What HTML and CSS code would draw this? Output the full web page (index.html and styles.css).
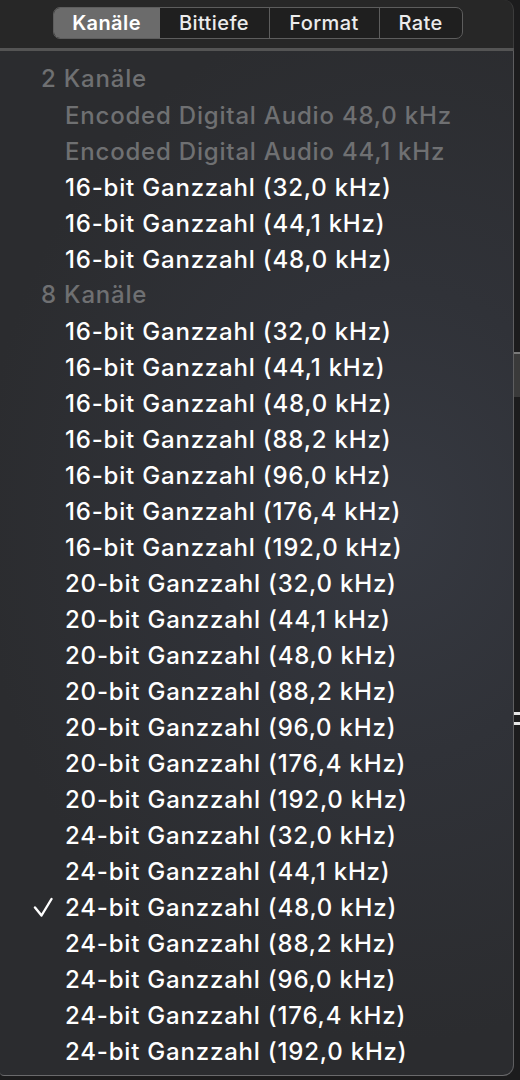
FILE: index.html
```html
<!DOCTYPE html>
<html lang="de">
<head>
    <meta charset="UTF-8">
    <meta name="viewport" content="width=device-width, initial-scale=1.0">
    <title>Audio-Format</title>
    <link rel="stylesheet" href="styles.css">
</head>
<body>
    <div class="window">
        <div class="panel">
            <div class="toolbar">
                <div class="segments">
                    <span class="segment active">Kanäle</span>
                    <span class="segment">Bittiefe</span>
                    <span class="segment">Format</span>
                    <span class="segment last">Rate</span>
                </div>
            </div>
            <div class="divider"></div>
            <div class="menu">
                <div class="menu-header">2 Kanäle</div>
                <div class="menu-item disabled"><span class="mark"></span>Encoded Digital Audio 48,0 kHz</div>
                <div class="menu-item disabled"><span class="mark"></span>Encoded Digital Audio 44,1 kHz</div>
                <div class="menu-item"><span class="mark"></span>16-bit Ganzzahl (32,0 kHz)</div>
                <div class="menu-item"><span class="mark"></span>16-bit Ganzzahl (44,1 kHz)</div>
                <div class="menu-item"><span class="mark"></span>16-bit Ganzzahl (48,0 kHz)</div>
                <div class="menu-header">8 Kanäle</div>
                <div class="menu-item"><span class="mark"></span>16-bit Ganzzahl (32,0 kHz)</div>
                <div class="menu-item"><span class="mark"></span>16-bit Ganzzahl (44,1 kHz)</div>
                <div class="menu-item"><span class="mark"></span>16-bit Ganzzahl (48,0 kHz)</div>
                <div class="menu-item"><span class="mark"></span>16-bit Ganzzahl (88,2 kHz)</div>
                <div class="menu-item"><span class="mark"></span>16-bit Ganzzahl (96,0 kHz)</div>
                <div class="menu-item"><span class="mark"></span>16-bit Ganzzahl (176,4 kHz)</div>
                <div class="menu-item"><span class="mark"></span>16-bit Ganzzahl (192,0 kHz)</div>
                <div class="menu-item"><span class="mark"></span>20-bit Ganzzahl (32,0 kHz)</div>
                <div class="menu-item"><span class="mark"></span>20-bit Ganzzahl (44,1 kHz)</div>
                <div class="menu-item"><span class="mark"></span>20-bit Ganzzahl (48,0 kHz)</div>
                <div class="menu-item"><span class="mark"></span>20-bit Ganzzahl (88,2 kHz)</div>
                <div class="menu-item"><span class="mark"></span>20-bit Ganzzahl (96,0 kHz)</div>
                <div class="menu-item"><span class="mark"></span>20-bit Ganzzahl (176,4 kHz)</div>
                <div class="menu-item"><span class="mark"></span>20-bit Ganzzahl (192,0 kHz)</div>
                <div class="menu-item"><span class="mark"></span>24-bit Ganzzahl (32,0 kHz)</div>
                <div class="menu-item"><span class="mark"></span>24-bit Ganzzahl (44,1 kHz)</div>
                <div class="menu-item checked">
                    <span class="mark">
                        <svg width="20" height="22" viewBox="0 0 20 22"><path d="M2 11.5 L8.5 19.5 L18.5 3" fill="none" stroke="#fff" stroke-width="2.4" stroke-linecap="round" stroke-linejoin="round"/></svg>
                    </span>24-bit Ganzzahl (48,0 kHz)
                </div>
                <div class="menu-item"><span class="mark"></span>24-bit Ganzzahl (88,2 kHz)</div>
                <div class="menu-item"><span class="mark"></span>24-bit Ganzzahl (96,0 kHz)</div>
                <div class="menu-item"><span class="mark"></span>24-bit Ganzzahl (176,4 kHz)</div>
                <div class="menu-item"><span class="mark"></span>24-bit Ganzzahl (192,0 kHz)</div>
            </div>
        </div>
        <div class="side">
            <div class="side-bar"></div>
            <div class="side-tick"></div>
            <div class="side-tick second"></div>
        </div>
    </div>
</body>
</html>
```

FILE: styles.css
```css
body, html {
    margin: 0;
    padding: 0;
    height: 100%;
    background-color: #1c1c1d;
    font-family: Inter, "Noto Sans", sans-serif;
    overflow: hidden;
}
.window {
    display: flex;
    width: 520px;
    height: 1080px;
}
.panel {
    width: 514px;
    display: flex;
    flex-direction: column;
}
.toolbar {
    height: 48px;
    background-color: #272727;
    border-top-right-radius: 10px;
    border-right: 1px solid #3c3c3c;
    display: flex;
    justify-content: center;
    align-items: flex-start;
    padding-top: 7px;
    box-sizing: border-box;
}
.segments {
    display: flex;
    height: 30px;
    border: 1.5px solid #5d5d5d;
    border-radius: 7px;
    background-color: #1f1f1f;
    overflow: hidden;
    margin-left: 2px;
}
.segment {
    display: flex;
    align-items: center;
    justify-content: center;
    width: 109px;
    font-size: 20px;
    font-weight: 500;
    letter-spacing: 0.4px;
    color: #ececec;
    border-right: 1.5px solid #5d5d5d;
}
.segment.active {
    width: 106px;
    background-color: #6b6b6b;
    font-weight: 600;
    color: #fff;
    border-right: none;
}
.segment.last {
    width: 82px;
    border-right: none;
}
.divider {
    height: 3px;
    background-color: #545454;
}
.menu {
    flex: 1;
    margin-bottom: 4px;
    padding: 10px 0 6px 0;
    background: radial-gradient(ellipse 420px 520px at 78% 46%, #363941 0%, #303238 45%, #2b2c2f 100%);
    border-right: 1.5px solid #5e5e60;
    border-bottom: 1.5px solid #6a6a6c;
    border-bottom-right-radius: 11px;
    border-bottom-left-radius: 4px;
}
.menu-header {
    height: 36px;
    line-height: 36px;
    padding-left: 41px;
    font-size: 24px;
    font-weight: 500;
    letter-spacing: 0.8px;
    color: #6f7072;
}
.menu-item {
    display: flex;
    align-items: center;
    height: 36px;
    padding-left: 33px;
    font-size: 24px;
    font-weight: 500;
    letter-spacing: 0.8px;
    color: #fff;
    white-space: nowrap;
}
.menu-item.disabled {
    color: #6f7072;
}
.mark {
    width: 32px;
    display: flex;
    align-items: center;
}
.side {
    flex: 1;
    display: flex;
    flex-direction: column;
}
.side-bar {
    margin-top: 352px;
    height: 43px;
    border-top: 2px solid #7a7a7a;
    background-color: #3a3a3a;
}
.side-tick {
    margin-top: 315px;
    height: 3px;
    background-color: #e6e6e6;
}
.side-tick.second {
    margin-top: 7px;
}
```
